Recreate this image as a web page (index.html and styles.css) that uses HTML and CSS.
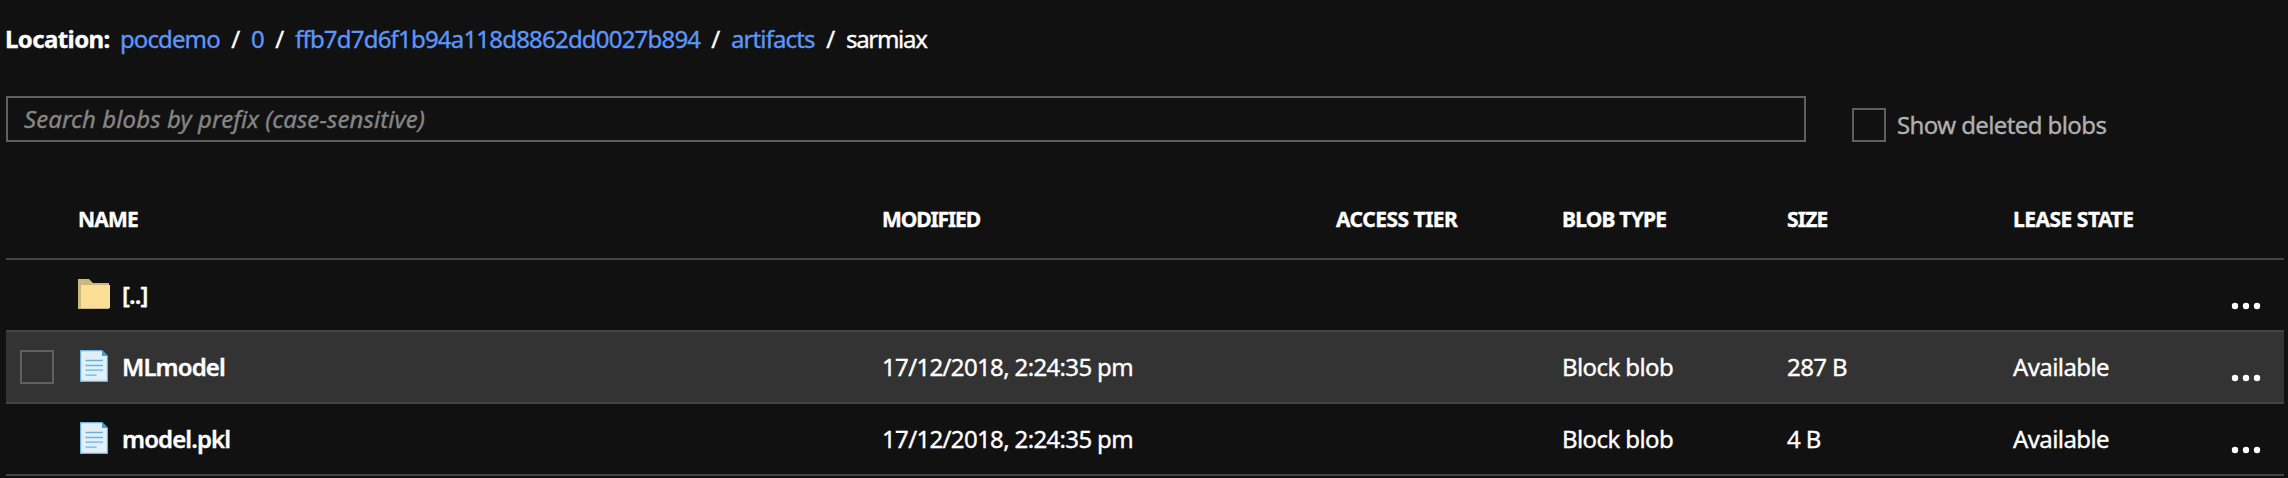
FILE: index.html
```html
<!DOCTYPE html>
<html lang="en">
<head>
<meta charset="utf-8">
<title>Blobs</title>
<link rel="stylesheet" href="styles.css">
</head>
<body>
<svg class="defs" width="0" height="0">
  <symbol id="folder" viewBox="0 0 32 30">
    <path d="M0 0h11l4 4h16v26H0z" fill="#cdb77c"/>
    <path d="M3 6h29v23H3z" fill="#fbdf94"/>
  </symbol>
  <symbol id="file" viewBox="0 0 28 32">
    <path d="M0 0h22l6 6v26H0z" fill="#6cb2da"/>
    <path d="M1.2 1.2H22V6h4.8v24.800H1.200z" fill="#e1f0f8"/>
    <path d="M22 0v6h6z" fill="#4a9fcb"/>
    <path d="M5.500 10.500h17.500M5.500 15.500h17.500M5.500 20.200h17.500M5.500 25.200h11" stroke="#6cb2da" stroke-width="1.300" fill="none"/>
  </symbol>
  <symbol id="more" viewBox="0 0 30 8">
    <g fill="#fff"><circle cx="4" cy="4" r="3.200"/><circle cx="15" cy="4" r="3.200"/><circle cx="26" cy="4" r="3.200"/></g>
  </symbol>
</svg>
<nav class="crumbs">
  <b class="label">Location:</b>
  <a class="c-account">pocdemo</a><i class="sep">/</i>
  <a class="c-zero">0</a><i class="sep">/</i>
  <a class="c-hash">ffb7d7d6f1b94a118d8862dd0027b894</a><i class="sep">/</i>
  <a class="c-art">artifacts</a><i class="sep">/</i>
  <span class="current">sarmiax</span>
</nav>
<div class="filters">
  <div class="search"><span>Search blobs by prefix (case-sensitive)</span></div>
  <div class="deleted"><span class="box"></span><span class="deleted-text">Show deleted blobs</span></div>
</div>
<main class="table">
  <div class="row head">
    <span></span><span>NAME</span><span class="h-modified">MODIFIED</span><span class="h-wide">ACCESS TIER</span><span>BLOB TYPE</span><span>SIZE</span><span class="h-wide">LEASE STATE</span><span></span>
  </div>
  <div class="row">
    <span></span>
    <span class="name"><svg class="folder"><use href="#folder"/></svg><b>[..]</b></span>
    <span></span><span></span><span></span><span></span><span></span>
    <svg class="more"><use href="#more"/></svg>
  </div>
  <div class="row hover">
    <span class="check"><span class="box"></span></span>
    <span class="name"><svg class="file"><use href="#file"/></svg><b>MLmodel</b></span>
    <span class="date">17/12/2018, 2:24:35 pm</span><span></span><span>Block blob</span><span>287 B</span><span>Available</span>
    <svg class="more"><use href="#more"/></svg>
  </div>
  <div class="row">
    <span></span>
    <span class="name"><svg class="file"><use href="#file"/></svg><b>model.pkl</b></span>
    <span class="date">17/12/2018, 2:24:35 pm</span><span></span><span>Block blob</span><span>4 B</span><span>Available</span>
    <svg class="more"><use href="#more"/></svg>
  </div>
</main>
</body>
</html>
```
FILE: styles.css
```css
* { box-sizing: border-box; }
body {
  margin: 0;
  height: 478px;
  overflow: hidden;
  background: #111;
  color: #fff;
  font: 24px/32px "Noto Sans", "Open Sans", sans-serif;
  letter-spacing: -0.6px;
  white-space: nowrap;
  -webkit-text-stroke: 0.35px currentColor;
}
.defs { position: absolute; }
.crumbs {
  display: flex;
  height: 96px;
  padding: 23px 0 0 5px;
}
.crumbs a { color: #5c96fa; }
.label { width: 115px; font-weight: 700; }
.sep { width: 31px; font-style: normal; text-align: center; }
.crumbs .c-account { width: 100px; letter-spacing: -0.9px; }
.c-zero { width: 13px; }
.crumbs .c-hash { width: 405px; letter-spacing: -0.8px; }
.crumbs .c-art { width: 84px; letter-spacing: -0.9px; }
.current { letter-spacing: -1.3px; }
.filters { display: flex; padding-left: 6px; }
.search {
  width: 1800px;
  height: 46px;
  padding: 5px 0 0 16px;
  border: 2px solid #606060;
  color: #858585;
  font-style: italic;
  letter-spacing: 0.080px;
}
.deleted {
  display: flex;
  gap: 11px;
  margin: 12px 0 0 46px;
  color: #b0b0b0;
}
.deleted-text { margin-top: 1px; }
.box {
  display: block;
  width: 34px;
  height: 34px;
  border: 2px solid #606060;
}
.table { margin: 46px 4px 0 6px; }
.row {
  display: grid;
  grid-template-columns: 72px 804px 454px 226px 225px 226px 218px 30px;
  height: 72px;
  padding-top: 19px;
  border-bottom: 2px solid #444;
}
.head {
  padding-top: 15px;
  font-size: 21px;
  font-weight: 700;
  letter-spacing: -0.8px;
}
.h-modified { letter-spacing: -1.1px; }
.h-wide { letter-spacing: -0.5px; }
.hover { background: #333; }
.name { display: flex; }
.name b { margin-left: 12px; font-weight: 600; letter-spacing: -0.9px; }
.date { letter-spacing: -0.65px; }
.folder { width: 32px; height: 30px; }
.file { width: 28px; height: 32px; margin: -1px 2px 0; }
.check { padding: 0 0 0 14px; margin-top: -1px; }
.more { width: 30px; height: 8px; margin-top: 23px; }
```
